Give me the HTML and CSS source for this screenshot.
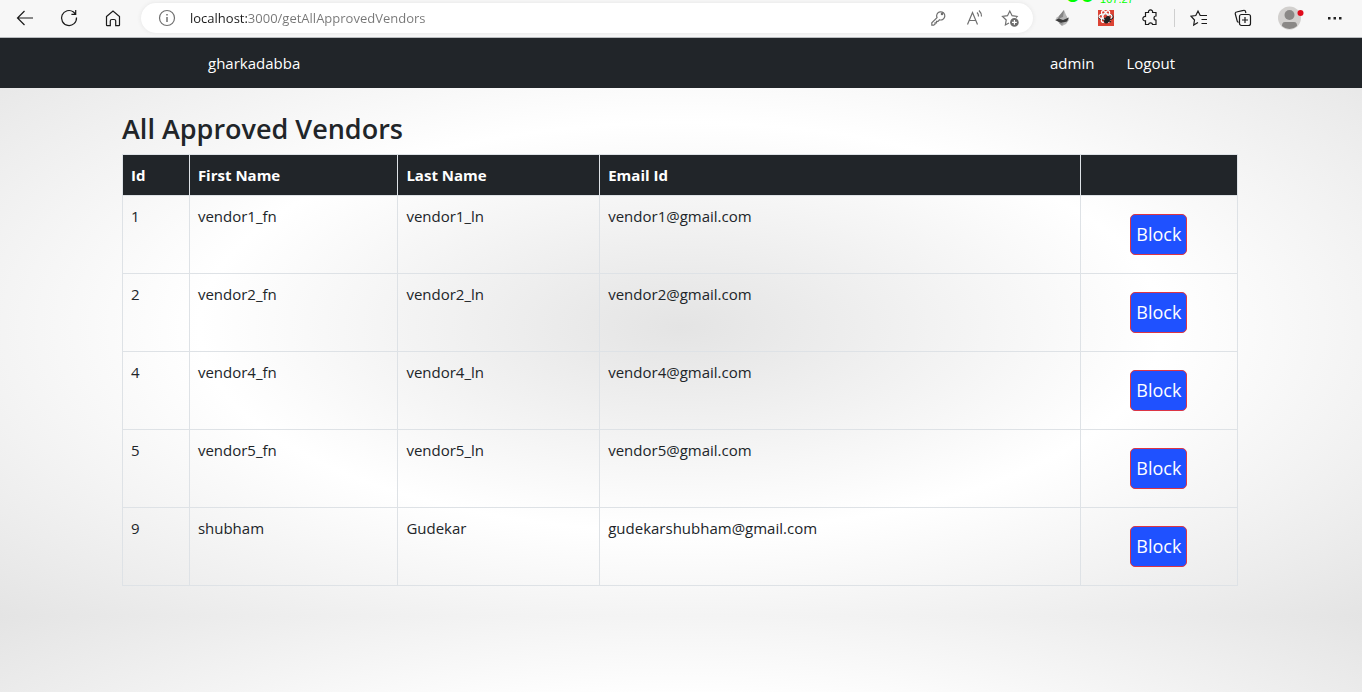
FILE: index.html
```html
<!DOCTYPE html>
<html lang="en">
<head>
<meta charset="utf-8">
<title>All Approved Vendors</title>
<link rel="stylesheet" href="styles.css">
</head>
<body>
<div class="browser-bar">
  <div class="nav-buttons">
    <button class="icon-button" aria-label="Back"><svg viewBox="0 0 18 18"><path d="M17 9H1.500M8.500 2 1.500 9l7 7"/></svg></button>
    <button class="icon-button" aria-label="Refresh"><svg viewBox="0 0 18 18"><path d="M16.500 8.500a7.500 7.500 0 1 1-3-5.500l2 2M15.700 1v4.300h-4.300"/></svg></button>
    <button class="icon-button" aria-label="Home"><svg viewBox="0 0 18 18"><path d="M2.500 7.500 9 2l6.500 5.500V16a.6.6 0 0 1-.6.6h-3.200V12a1.500 1.500 0 0 0-1.500-1.500H7.800A1.500 1.500 0 0 0 6.300 12v4.600H3.100a.6.6 0 0 1-.6-.6z"/></svg></button>
  </div>
  <div class="address">
    <button class="icon-button muted" aria-label="Site information"><svg viewBox="0 0 18 18"><circle cx="9" cy="9" r="7.500"/><path d="M9 8v5M9 5v1.500" stroke-width="1.500"/></svg></button>
    <input class="url" type="text" aria-label="Address" value="localhost:3000/getAllApprovedVendors">
    <div class="address-tools">
      <button class="icon-button muted" aria-label="Passwords"><svg viewBox="0 0 18 18"><path d="M8 8.600a4.100 4.100 0 1 1 2.500 2.200L9 12.300H7.500v1.500H6v1.500L4.700 16.200H2.800v-2.400z"/><circle cx="13" cy="5" r=".7"/></svg></button>
      <button class="icon-button muted" aria-label="Read aloud"><svg viewBox="0 0 18 18"><path d="M2.500 15.500 7.500 3.500l5 12M4.200 11.500h6.600M12 3.500a5 5 0 0 1 1.500 4M14 1.500a8 8 0 0 1 2.500 6"/></svg></button>
      <button class="icon-button muted" aria-label="Add to favorites"><svg viewBox="0 0 18 18"><path d="M8 14 4.400 16l.8-5L1.500 7.500l5-.8L8.800 2l2.300 4.700 5 .8-1 1"/><circle cx="13.400" cy="13.400" r="4.300" fill="#6b6b6b" stroke="none"/><path d="M13.400 11v4.800M11 13.400h4.800" stroke="#fff"/></svg></button>
    </div>
  </div>
  <div class="extensions">
    <button class="icon-button" aria-label="Bird extension"><svg class="solid" viewBox="0 0 18 18"><path d="M11 1 6 7 3 9l3 5 3 3 4-2 3-4-3-5z" fill="#b5b5b5"/><path d="m11 1-5 6-1 3 5-2z" fill="#858585"/><path d="m2 11 4-1.500 4 1.500 6-2.500-2 4-6 1.500z" fill="#3c3c3c"/><path d="m6 14 5-.5-2 3z" fill="#999"/></svg></button>
    <button class="icon-button" aria-label="React extension"><svg viewBox="0 0 18 18"><path fill="#dc4334" stroke="none" d="M1 1h16v16H1z"/><ellipse cx="9" cy="8" rx="7" ry="2.800"/><g stroke="#fff"><ellipse cx="8.500" cy="7.500" rx="6.500" ry="2.600"/><ellipse cx="8.500" cy="7.500" rx="6.500" ry="2.600" transform="rotate(60 8.500 7.500)"/><ellipse cx="8.500" cy="7.500" rx="6.500" ry="2.600" transform="rotate(120 8.500 7.500)"/></g><ellipse cx="10.500" cy="10.500" rx="2.600" ry="4" fill="#222" stroke="none" transform="rotate(30 10 10)"/><path d="m7 9 7 4M7 13l7-3" stroke="#222"/></svg></button>
    <button class="icon-button" aria-label="Extensions"><svg viewBox="0 0 18 18"><path d="M4.500 3.500h3a2.100 2.100 0 1 1 4.100 0h3.400V7a2 2 0 0 0 0 4v4.500h-3.400a2.100 2.100 0 0 0-4.100 0h-3v-3.700a2.200 2.200 0 1 1 0-4.300z"/></svg></button>
    <span class="overlay-stat" aria-hidden="true"><b>60</b><span>107.27</span></span>
  </div>
  <div class="browser-tools">
    <button class="icon-button" aria-label="Favorites"><svg viewBox="0 0 18 18"><path d="M8 13.500 3.700 16l.8-5L1 7.200l4.800-.7L8 2l2.200 4.500H17M11.500 10.500H17M11.500 14.500H17"/></svg></button>
    <button class="icon-button" aria-label="Collections"><svg viewBox="0 0 18 18"><path d="M4.500 13.500 3.300 12.500 1.300 5a1.600 1.600 0 0 1 1.200-2l7-1.700a1.600 1.600 0 0 1 2 1.200l.4 1.500"/><rect x="5.500" y="5.500" width="11" height="11" rx="2"/><path d="M11 8v6M8 11h6"/></svg></button>
    <button class="icon-button avatar" aria-label="Profile"><svg class="solid" viewBox="0 0 26 24"><circle cx="11.500" cy="12" r="11.500" fill="#d2d0ce"/><circle cx="11.500" cy="9" r="5" fill="#8a8886"/><path d="M4 20C4 16.500 5.500 16 7.500 16h8c2 0 3.500.5 3.500 4a11 11 0 0 1-15 0z" fill="#8a8886"/><circle cx="22.500" cy="7" r="3" fill="#e00b1c"/></svg></button>
    <button class="icon-button" aria-label="Settings and more"><svg class="solid" viewBox="0 0 18 18"><path fill="#222" d="M2 8h2.500v2.500H2zM7.500 8H10v2.500H7.500zM13 8h2.500v2.500H13z"/></svg></button>
  </div>
</div>
<header class="site-header">
  <nav class="site-nav">
    <a href="#">gharkadabba</a>
    <div class="account-links"><a href="#">admin</a><a href="#">Logout</a></div>
  </nav>
</header>
<main class="page">
  <div class="container">
    <h1>All Approved Vendors</h1>
    <table>
      <colgroup><col class="col-id"><col class="col-first"><col class="col-last"><col class="col-email"><col class="col-action"></colgroup>
      <thead><tr><th>Id</th><th>First Name</th><th>Last Name</th><th>Email Id</th><th></th></tr></thead>
      <tbody>
        <tr><td>1</td><td>vendor1_fn</td><td>vendor1_ln</td><td>vendor1@gmail.com</td><td class="action"><button class="block">Block</button></td></tr>
        <tr><td>2</td><td>vendor2_fn</td><td>vendor2_ln</td><td>vendor2@gmail.com</td><td class="action"><button class="block">Block</button></td></tr>
        <tr><td>4</td><td>vendor4_fn</td><td>vendor4_ln</td><td>vendor4@gmail.com</td><td class="action"><button class="block">Block</button></td></tr>
        <tr><td>5</td><td>vendor5_fn</td><td>vendor5_ln</td><td>vendor5@gmail.com</td><td class="action"><button class="block">Block</button></td></tr>
        <tr><td>9</td><td>shubham</td><td>Gudekar</td><td>gudekarshubham@gmail.com</td><td class="action"><button class="block">Block</button></td></tr>
      </tbody>
    </table>
  </div>
</main>
</body>
</html>
```
FILE: styles.css
```css
* { box-sizing: border-box; }
body {
  margin: 0;
  min-height: 100vh;
  display: flex;
  flex-direction: column;
  font: 15px/24px "Segoe UI", "Open Sans", sans-serif;
  color: #212529;
}
button { font: inherit; cursor: pointer; }
.browser-bar {
  display: flex;
  align-items: center;
  height: 38px;
  padding: 0 18px 1px 16px;
  background: #f7f7f7;
  border-bottom: 1px solid #b9bcbf;
  overflow: hidden;
}
.icon-button {
  display: block;
  flex: none;
  width: 18px;
  height: 18px;
  padding: 0;
  border: 0;
  background: none;
  color: #1b1b1b;
}
.icon-button svg {
  display: block;
  width: 100%;
  height: 100%;
  fill: none;
  stroke: currentColor;
  stroke-width: 1.2;
}
.icon-button svg.solid { stroke: none; }
.icon-button.muted { color: #707070; }
.icon-button.avatar { width: 26px; height: 24px; }
.nav-buttons { display: flex; gap: 26px; }
.address {
  flex: 1;
  display: flex;
  align-items: center;
  height: 30px;
  margin: 0 20px 0 19px;
  padding: 0 14px 0 17px;
  border-radius: 15px;
  background: #fff;
  box-shadow: 0 0 4px #e4e4e4;
}
.url {
  flex: 1;
  min-width: 0;
  margin-left: 14px;
  padding: 0;
  border: 0;
  font: 13px/20px "Segoe UI", "Open Sans", sans-serif;
  color: transparent;
  background: linear-gradient(90deg, #1b1b1b 57px, #767676 57px);
  background-clip: text;
}
.address-tools { display: flex; gap: 18px; }
.extensions {
  position: relative;
  display: flex;
  gap: 26px;
  padding-right: 15px;
  border-right: 1px solid #cfcfcf;
}
.overlay-stat {
  position: absolute;
  left: 12px;
  top: -29px;
  display: flex;
  gap: 5px;
  align-items: flex-end;
  color: #0f0;
  font: 11px/16px "Liberation Sans", sans-serif;
}
.overlay-stat b { font-size: 27px; line-height: 27px; }
.browser-tools { display: flex; align-items: center; gap: 26px; margin-left: 15px; }
.avatar + .icon-button { margin-left: -4px; }

.site-header { background: #212529; }
.site-nav {
  display: flex;
  justify-content: space-between;
  max-width: 1140px;
  margin: 0 auto;
  padding: 13px 76px 13px 97px;
}
.site-nav a { color: #fff; text-decoration: none; }
.account-links { display: flex; gap: 32px; }

.page {
  flex: 1;
  padding-right: 2px;
  background: radial-gradient(ellipse, #e4e4e4, #fff 50%, #e4e4e4) 0 -50px / 100% 578px;
}
.container { max-width: 1140px; margin: 0 auto; padding: 24px 12px; }
h1 { margin: 0 0 8px; font-size: 27px; line-height: 34px; font-weight: 600; }
table { width: 100%; table-layout: fixed; border-collapse: collapse; }
th, td { padding: 8px; border: 1px solid #dee2e6; text-align: left; vertical-align: top; }
th { background: #212529; color: #fff; font-weight: 700; }
.col-id { width: 6%; }
.col-first { width: 18.7%; }
.col-last { width: 18.1%; }
.col-email { width: 43.1%; }
.col-action { width: 14.1%; }
td.action { padding: 18px 8px; text-align: center; line-height: 0; }
.block {
  padding: 5px;
  border: 1px solid #dc3545;
  border-radius: 5px;
  background: #1f51ff;
  color: #fff;
  font-size: 18px;
  line-height: 29px;
}
```
